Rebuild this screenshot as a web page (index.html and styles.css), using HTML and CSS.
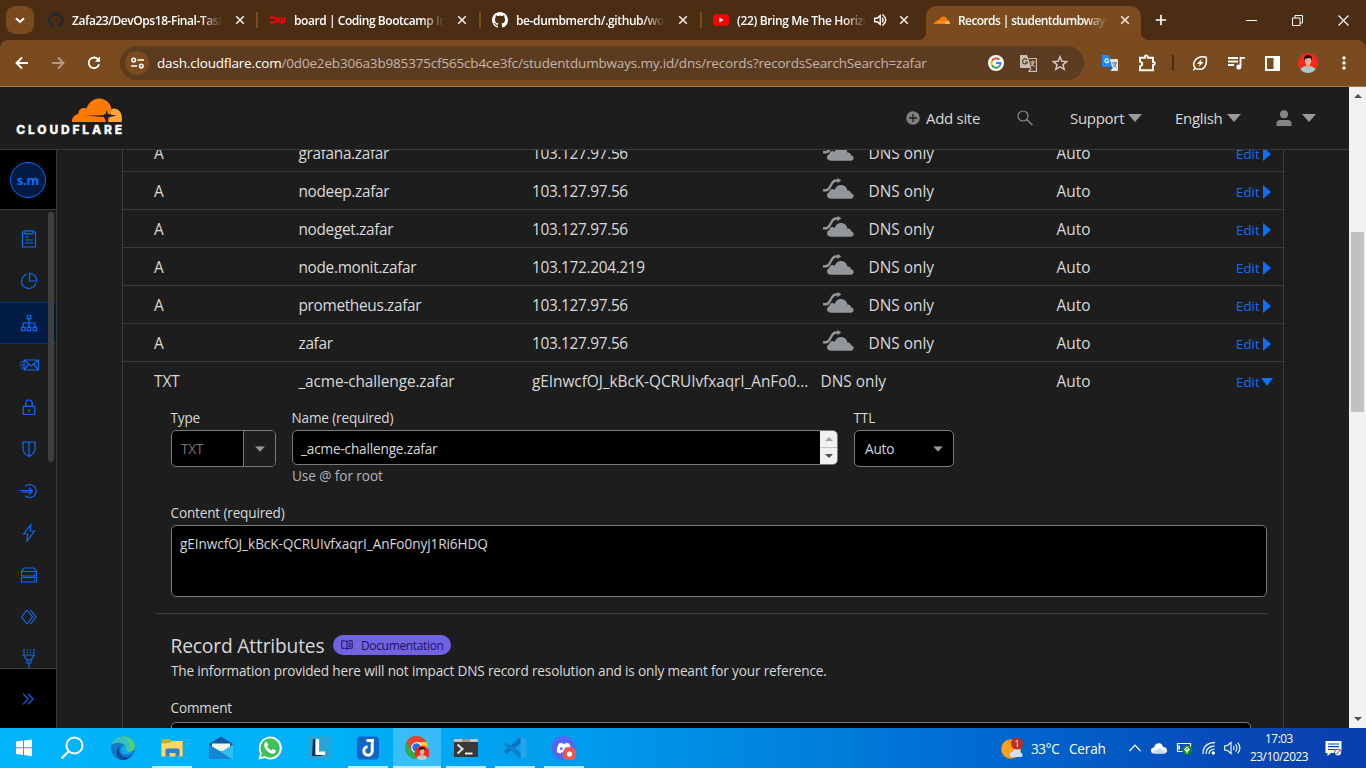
FILE: index.html
```html
<!DOCTYPE html>
<html lang="en">
<head>
<meta charset="utf-8">
<title>Records | studentdumbways</title>
<link rel="stylesheet" href="styles.css">
</head>
<body>
<svg width="0" height="0" class="defs">
  <symbol id="x" viewBox="0 0 10 10"><path d="M1.2 1.2 8.8 8.8M8.8 1.2 1.2 8.8" stroke="#f3e9e0" stroke-width="1.6"/></symbol>
  <symbol id="gh" viewBox="0 0 16 16"><path d="M8 0C3.58 0 0 3.58 0 8c0 3.54 2.29 6.53 5.47 7.59.4.07.55-.17.55-.38 0-.19-.01-.82-.01-1.49-2.01.37-2.53-.49-2.69-.94-.09-.23-.48-.94-.82-1.13-.28-.15-.68-.52-.01-.53.63-.01 1.08.58 1.23.82.72 1.21 1.87.87 2.33.66.07-.52.28-.87.51-1.07-1.78-.2-3.64-.89-3.64-3.95 0-.87.31-1.59.82-2.15-.08-.2-.36-1.02.08-2.12 0 0 .67-.21 2.2.82.64-.18 1.32-.27 2-.27s1.36.09 2 .27c1.53-1.04 2.2-.82 2.2-.82.44 1.1.16 1.92.08 2.12.51.56.82 1.27.82 2.15 0 3.07-1.87 3.75-3.65 3.95.29.25.54.73.54 1.48 0 1.07-.01 1.93-.01 2.2 0 .21.15.46.55.38A8.01 8.01 0 0 0 16 8c0-4.42-3.58-8-8-8Z"/></symbol>
  <symbol id="cloud" viewBox="0 0 34 24"><path d="M2 13.300H4.500c2.200 0 2.800-.5 4.200-3l2-3.500C12 4.300 13 3.500 15 3.500h2.500" fill="none" stroke="#92979b" stroke-width="2.400"/><path d="M16.500 1 20.300 3.300l-3.800 3z" fill="#92979b"/><path d="M10.500 21.800c-2.800 0-4.500-1.500-4.500-3.600 0-1.600 1-2.800 2.500-3.300 0-1.800 1.200-3 2.900-3 1 0 1.800.4 2.300 1.100C14.700 9.500 16.900 8 19.800 8c3.700 0 6.300 2.400 6.500 5.500 2.200-.2 3.700 1 3.700 2.800 1.600.2 2.600 1.300 2.600 2.700 0 1.700-1.200 2.800-2.900 2.800z" fill="#92979b"/></symbol>
  <symbol id="caret" viewBox="0 0 14 8"><path d="M0 0h14L7 8z" fill="#999"/></symbol>
  <symbol id="face" viewBox="0 0 20 20"><circle cx="10" cy="10" r="10" fill="#f8261c"/><path d="M2.500 16.500C4 13.500 7 13 10 13s6 .5 7.500 3.500A10 10 0 0 1 2.500 16.500z" fill="#a9cbd0"/><path d="M8 10h4v4l-2 1-2-1z" fill="#d9a184"/><ellipse cx="10" cy="7.800" rx="3.200" ry="4" fill="#e5b294"/><path d="M6.200 7.500C5.500 3.500 7.500 2 10.200 2s4.500 1.700 3.600 5.500c-.4-1.500-.8-2.300-1.500-2.500-1.500.3-4.300-.2-6.100 2.500z" fill="#17130f"/></symbol>
</svg>

<div class="tabs">
  <div class="tabsearch"><svg width="10" height="7" viewBox="0 0 10 7"><path d="M1 1.200 5 5l4-3.800" fill="none" stroke="#fff" stroke-width="1.900"/></svg></div>
  <div class="tab t1"><svg class="fav" fill="#24292f"><use href="#gh"/></svg><span class="title">Zafa23/DevOps18-Final-Task</span><svg class="x"><use href="#x"/></svg></div>
  <div class="tab t2"><svg class="fav" viewBox="0 0 16 16"><path d="M0 5.500h3.500q3 0 3 2.500t-3 2.500H0M8.500 5v2.500q0 3 3.200 3t3.200-3V5M11.700 5v4" fill="none" stroke="#f00808" stroke-width="1.900"/></svg><span class="title">board | Coding Bootcamp Indonesia</span><svg class="x"><use href="#x"/></svg></div>
  <div class="tab t3"><svg class="fav" fill="#fff"><use href="#gh"/></svg><span class="title">be-dumbmerch/.github/workflows</span><svg class="x"><use href="#x"/></svg></div>
  <div class="tab t4"><svg class="fav" viewBox="0 0 16 16"><rect y="2.200" width="16" height="11.600" rx="3" fill="#f00"/><path d="M6.300 5.500v5l4.200-2.500z" fill="#fff"/></svg><span class="title">(22) Bring Me The Horizon</span><svg class="aud" width="14" height="14" viewBox="0 0 14 14"><path d="M1.700 5.200h2.500l3-2.600v8.800l-3-2.600H1.700z" fill="none" stroke="#fff" stroke-width="1.400"/><path d="M9.200 4.700q1.700 2.300 0 4.600M9.500 1.500q6.500 5.500 0 11" fill="none" stroke="#fff" stroke-width="1.400"/></svg><svg class="x"><use href="#x"/></svg></div>
  <div class="tab active"><svg class="fav" viewBox="0 0 16 16"><path d="M0 12c0-2 1.300-2.800 2.500-2.800C3 7.500 4.500 7.500 5.500 8c.8-2.600 2.500-3.500 4-3.500 2 0 3.500 1.500 3.500 4V12z" fill="#ff7a00"/><path d="M10.500 12c1-1.500 1.500-3.800 2.700-3.800 1.800 0 2.800 1.500 2.800 3.800z" fill="#ffb055"/><path d="M4 10h8" stroke="#ffd0a0" stroke-width=".6"/></svg><span class="title">Records | studentdumbways.my.id</span><svg class="x"><use href="#x"/></svg></div>
  <svg class="plus" width="12" height="12" viewBox="0 0 12 12"><path d="M6 .8v10.400M.8 6h10.400" stroke="#fff" stroke-width="1.600"/></svg>
  <div class="win">
    <svg width="11" height="11"><path d="M0 5.500h11" stroke="#fff"/></svg>
    <svg width="11" height="11"><path d="M.5 3h7.500v7.500H.5zM3 3V.5h7.500V8H8" fill="none" stroke="#fff"/></svg>
    <svg width="11" height="11"><path d="M.5.500l10 10M10.500.500l-10 10" stroke="#fff" stroke-width="1.100"/></svg>
  </div>
</div>

<div class="toolbar">
  <div class="nav">
    <svg width="14" height="14" viewBox="0 0 14 14"><path d="M13 7H2M7 1.500 1.500 7 7 12.500" fill="none" stroke="#fff" stroke-width="1.800"/></svg>
    <svg width="14" height="14" viewBox="0 0 14 14" opacity=".45"><path d="M1 7h11M7 1.500 12.500 7 7 12.500" fill="none" stroke="#fff" stroke-width="1.800"/></svg>
    <svg width="14" height="14" viewBox="0 0 14 14"><path d="M12.100 8.300A5.300 5.300 0 1 1 11 3.300L12.600 5" fill="none" stroke="#fff" stroke-width="1.800"/><path d="M13 .5v5.200H7.800z" fill="#fff"/></svg>
  </div>
  <div class="omni">
    <div class="site"><svg width="13" height="12" viewBox="0 0 13 12"><g fill="none" stroke="#fff" stroke-width="1.500"><circle cx="2.700" cy="3" r="1.800"/><path d="M6.500 3H13M0 9h6"/><circle cx="10.300" cy="9" r="1.800"/></g></svg></div>
    <div class="url"><b>dash.cloudflare.com</b><span>/0d0e2eb306a3b985375cf565cb4ce3fc/studentdumbways.my.id/dns/records?recordsSearchSearch=zafar</span></div>
    <div class="omniicons">
      <svg width="16" height="16" viewBox="0 0 16 16"><circle cx="8" cy="8" r="8" fill="#fff"/><g fill="none" stroke-width="2"><path d="M4 5.700A4.600 4.600 0 0 1 11.300 4.700" stroke="#ea4335"/><path d="M4 5.700a4.600 4.600 0 0 0 0 4.600" stroke="#fbbc05"/><path d="M4 10.300a4.600 4.600 0 0 0 7.200 1.100" stroke="#34a853"/><path d="M11.200 11.400A4.600 4.600 0 0 0 12.600 8H8" stroke="#4285f4"/></g></svg>
      <svg width="17" height="17" viewBox="0 0 17 17"><path d="M1 0h6l1.500 3.500L11 13H1q-1 0-1-1V1q0-1 1-1z" fill="#c9bdb2"/><path d="M9 3.500h7.400v12.900H9l2-3.400" fill="none" stroke="#c9bdb2" stroke-width="1.200"/><path d="M10 7h5M12.500 5.500V7M14 7q-1 3-3.500 4M11.500 8q1 2.500 3 3.500" fill="none" stroke="#c9bdb2" stroke-width="1.100"/><path d="M7 5a2.500 2.500 0 1 0 .4 2H5" fill="none" stroke="#5c3c20" stroke-width="1.200"/></svg>
      <svg width="16" height="16" viewBox="0 0 16 16"><path d="m8 1.800 1.900 4.400 4.700.4-3.600 3.100 1.100 4.600L8 11.900l-4.100 2.400L5 9.700 1.400 6.600l4.700-.4z" fill="none" stroke="#d6cbc1" stroke-width="1.500"/></svg>
    </div>
  </div>
  <div class="exts">
    <svg width="16" height="16" viewBox="0 0 16 16"><path d="M7 4h8q1 0 1 1v10q0 1-1 1H9z" fill="#dce4ec"/><path d="M1 0h6l3 12H1q-1 0-1-1V1q0-1 1-1z" fill="#2685f5"/><path d="M8 12h3l-2.500 4z" fill="#1755c5"/><path d="M6.500 4.500a2 2 0 1 0 .3 1.800H5" fill="none" stroke="#fff" stroke-width="1.100"/><path d="M10 8h5M12.500 7v1M14 8q-.5 2.500-2.500 4M11.500 9q1 2.500 3 3.500" fill="none" stroke="#678" stroke-width="1"/></svg>
    <svg class="puz" width="18" height="18" viewBox="0 0 18 18"><path d="M2 3.800h4.800V3a1.500 1.500 0 0 1 3 0v.8H15V8h.3a1.500 1.500 0 0 1 0 3H15v5.200H2v-4q2.300-.5 2.300-2.200T2 7.800z" fill="none" stroke="#fff" stroke-width="1.900"/></svg>
    <i class="tsep"></i>
    <svg class="leaf" width="16" height="16" viewBox="0 0 16 16"><path d="M3.500 13.300C-.8 9 3.500 1.800 10.500 1.700c1.500 0 3 0 3.500.4 1.700 6.900-1.500 12.200-6 12.200-1.800 0-3.300-.3-4.500-1zM1.200 15.200l2.300-2" fill="none" stroke="#fff" stroke-width="1.500"/><path d="M9.700 4 4.800 9h3l-1.200 3.200L11.500 7H8.700z" fill="#fff"/></svg>
    <svg class="mus" width="17" height="14" viewBox="0 0 17 14"><path d="M0 2h10M0 5.500h10M0 9h6M12.500 11V1.800H17" fill="none" stroke="#fff" stroke-width="1.800"/><circle cx="10.800" cy="11" r="2.500" fill="#fff"/></svg>
    <svg class="pan" width="15" height="15" viewBox="0 0 15 15"><path d="M1 1h13v13H1z" fill="none" stroke="#fff" stroke-width="2"/><path d="M8.500 1H14v13H8.500z" fill="#fff"/></svg>
    <svg class="ava" width="20" height="20"><use href="#face"/></svg>
    <svg class="dots" width="4" height="14" viewBox="0 0 4 14" fill="#fff"><circle cx="2" cy="2" r="1.700"/><circle cx="2" cy="7" r="1.700"/><circle cx="2" cy="12" r="1.700"/></svg>
  </div>
</div>

<div class="page">
  <div class="app">
    <div class="header">
      <svg class="logo" width="110" height="42" viewBox="0 0 110 42">
        <path d="M57 29c-.5-4 2.500-7.500 6.500-8-.5-4 3.500-7 8-5.500C73 11 77.500 5.500 84 5.500c7 0 12 5 12.500 11.500L93.500 29z" fill="#ff7a00"/>
        <path d="M96.500 16c5-2 10 2 10.300 8 .1 2 .2 3.500-.1 5H93c2-4 2.500-8 3.500-13z" fill="#ffa73d"/>
        <path d="M70 22.500l18-.300 2.700-1.500 1-4 1.200 4.300 8.600 1.700-8.200 1.600L93 29h-2l-2-5z" fill="#1d1d1d"/>
        <text x="1.300" y="41" class="word" textLength="105.500">CLOUDFLARE</text>
      </svg>
      <div class="hitem add"><svg width="14" height="14" viewBox="0 0 14 14"><circle cx="7" cy="7" r="6.800" fill="#808080"/><path d="M7 3v8M3 7h8" stroke="#1d1d1d" stroke-width="1.300"/></svg><span>Add site</span></div>
      <svg class="find" width="16" height="16" viewBox="0 0 16 16"><circle cx="6" cy="6" r="5" fill="none" stroke="#8a8a8a" stroke-width="1.200"/><path d="m9.500 9.500 6 5.500" stroke="#8a8a8a" stroke-width="1.400"/></svg>
      <div class="hitem sup"><span>Support</span><svg width="14" height="8"><use href="#caret"/></svg></div>
      <div class="hitem eng"><span>English</span><svg width="14" height="8"><use href="#caret"/></svg></div>
      <div class="hitem usr"><svg width="16" height="16" viewBox="0 0 16 16" fill="#858585"><circle cx="8" cy="4.300" r="4"/><path d="M.5 16v-2.500Q.5 10 4 10h8q3.500 0 3.500 3.500V16z"/></svg><svg width="14" height="8"><use href="#caret"/></svg></div>
    </div>
    <div class="body">
      <div class="side">
        <div class="acct"><span>s.m</span></div>
        <div class="menu">
          <div class="mi"><svg viewBox="0 0 20 20"><path d="M6 3H3.500v15h13V3H14M6 1.800h8v3H6zM6 8h4M6 11h8M6 14h8"/></svg></div>
          <div class="mi"><svg viewBox="0 0 20 20"><path d="M8 3.300A7.200 7.200 0 1 0 16.800 12M10.500 2.300V10h7.200a7.400 7.400 0 0 0-7.200-7.700z"/></svg></div>
          <div class="mi on"><svg viewBox="0 0 20 20"><path d="M8.300 2.500h3.400v3.400H8.300zM2.500 14.300h3.400v3.400H2.500zM8.300 14.300h3.400v3.400H8.300zM14.100 14.300h3.400v3.400h-3.400zM10 6v8M4.200 14v-4h11.600v4"/></svg></div>
          <div class="mi"><svg viewBox="0 0 20 20"><path d="M5 5h14.500v10H5zM5 5l7.200 6 7.300-6M5 15l5-6M19.500 15l-5-6M1.500 7H4M.5 10H4M1.500 13H4"/></svg></div>
          <div class="mi"><svg viewBox="0 0 20 20"><path d="M4.300 9.300h11.400v8.200H4.300zM6.800 9V6.300Q6.800 3 10 3t3.200 3.300V9M10 12v3"/></svg></div>
          <div class="mi"><svg viewBox="0 0 20 20"><path d="M4 3h12v7q0 4.500-6 7.500Q4 14.500 4 10zM10 3v14"/></svg></div>
          <div class="mi"><svg viewBox="0 0 20 20"><path d="M6.200 5.300a6.500 6.500 0 1 1 0 9.400M.5 9.500H13M3 11H13M10 6.800l3.500 3.400L10 13.500"/></svg></div>
          <div class="mi"><svg viewBox="0 0 20 20"><path d="M11.800 1.500 4.800 11h4l-1 7.500L15.500 8h-4.300z"/></svg></div>
          <div class="mi"><svg viewBox="0 0 20 20"><path d="M2.500 6.500h15V11h-15zM2.500 6.500 5 3h10l2.500 3.500M2.500 12.500h15V17h-15zM14.500 9h1.500M14.500 15h1.500"/></svg></div>
          <div class="mi"><svg viewBox="0 0 20 20"><path d="M8 3 2.500 10 8 17M8 3l5.500 7L8 17M11.500 3l5.500 7-5.500 7"/></svg></div>
          <div class="mi"><svg viewBox="0 0 20 20"><path d="M4 .8h2M8 .8h1M11 .8h1M14 .8h2M4 3.300h2M8 3.300h1M11 3.300h1M14 3.300h2M4.500 6h11L12 11v3H8v-3zM8 11h4M10 14v5"/></svg></div>
          <i class="mscroll"></i>
        </div>
        <div class="expand"><svg width="12" height="12" viewBox="0 0 12 12"><path d="m1 .7 5 5.300-5 5.300M6 .7 11 6l-5 5.300" fill="none" stroke="#0a66f5" stroke-width="1.200"/></svg></div>
      </div>
      <div class="main">
        <div class="card">
          <div class="row first"><span>A</span><span class="nm">grafana.zafar</span><span class="ip">103.127.97.56</span><span class="px"><svg><use href="#cloud"/></svg>DNS only</span><span>Auto</span><a>Edit<i></i></a></div>
          <div class="row"><span>A</span><span class="nm">nodeep.zafar</span><span class="ip">103.127.97.56</span><span class="px"><svg><use href="#cloud"/></svg>DNS only</span><span>Auto</span><a>Edit<i></i></a></div>
          <div class="row"><span>A</span><span class="nm">nodeget.zafar</span><span class="ip">103.127.97.56</span><span class="px"><svg><use href="#cloud"/></svg>DNS only</span><span>Auto</span><a>Edit<i></i></a></div>
          <div class="row"><span>A</span><span class="nm">node.monit.zafar</span><span class="ip">103.172.204.219</span><span class="px"><svg><use href="#cloud"/></svg>DNS only</span><span>Auto</span><a>Edit<i></i></a></div>
          <div class="row"><span>A</span><span class="nm">prometheus.zafar</span><span class="ip">103.127.97.56</span><span class="px"><svg><use href="#cloud"/></svg>DNS only</span><span>Auto</span><a>Edit<i></i></a></div>
          <div class="row"><span>A</span><span class="nm">zafar</span><span class="ip">103.127.97.56</span><span class="px"><svg><use href="#cloud"/></svg>DNS only</span><span>Auto</span><a>Edit<i></i></a></div>
          <div class="row open"><span>TXT</span><span class="acme">_acme-challenge.zafar</span><span class="val">gEInwcfOJ_kBcK-QCRUIvfxaqrI_AnFo0...</span><span class="px">DNS only</span><span>Auto</span><a>Edit<i class="down"></i></a></div>
          <div class="form">
            <div class="fields">
              <div class="f type"><label>Type</label><div class="box"><span>TXT</span><b><svg width="10" height="6" viewBox="0 0 14 8"><use href="#caret"/></svg></b></div></div>
              <div class="f name"><label>Name (required)</label><div class="box"><span>_acme-challenge.zafar</span><div class="spin"><i class="up"></i><i class="dn"></i></div></div><small>Use @ for root</small></div>
              <div class="f ttl"><label>TTL</label><div class="box"><span>Auto</span><svg width="10" height="6" viewBox="0 0 14 8"><use href="#caret"/></svg></div></div>
            </div>
            <div class="f content"><label>Content (required)</label><div class="area">gEInwcfOJ_kBcK-QCRUIvfxaqrI_AnFo0nyj1Ri6HDQ</div></div>
            <div class="attrs">
              <div class="head"><h2>Record Attributes</h2><span class="badge"><svg width="12" height="10" viewBox="0 0 12 10"><path d="M6 1.500Q3.500.2.800.8v7.500Q3.500 7.700 6 9q2.500-1.300 5.200-.700V.8Q8.500.2 6 1.500zM6 1.500V9M7.500 3.300h2.200M7.500 5h2.200M7.500 6.600h2.200" fill="none" stroke="#21106b" stroke-width="1"/></svg><span>Documentation</span></span></div>
              <p>The information provided here will not impact DNS record resolution and is only meant for your reference.</p>
              <label>Comment</label>
              <div class="comment"></div>
            </div>
          </div>
        </div>
      </div>
    </div>
  </div>
  <div class="scroll"><i class="up"></i><b></b><i class="dn"></i></div>
</div>

<div class="taskbar">
  <div class="apps">
    <div class="ap"><svg viewBox="0 0 24 24"><path d="M4 5.600 11 4.600V11.300H4zM12 4.500 20 3.400v7.900h-8zM4 12.300h7V19L4 18zM12 12.300h8v7.900l-8-1.100z" fill="#fff"/></svg></div>
    <div class="ap wide"><svg viewBox="0 0 24 24"><circle cx="14.500" cy="9.500" r="8" fill="none" stroke="#fff" stroke-width="2"/><path d="M8.800 15.200 1.500 22.500" stroke="#fff" stroke-width="2.300"/></svg></div>
    <div class="ap"><svg viewBox="0 0 24 24"><circle cx="12" cy="12" r="12" fill="#1577c9"/><path d="M.5 9C2-1 17-3.500 23 7c2 5-1.500 9.500-7 8.500-3-.5-1.500-2-1.500-4C13.500 7 5 5 .5 9z" fill="#35c1c4"/><path d="M12 0c7 .2 12 5 12 10.500 0 4-3.500 6-8 5 6-3 3-12-4-15.500z" fill="#5ad45c" opacity=".8"/><path d="M9 11c-2 4 0 9 5 10 3 .7 6-.5 8-2.500C19 22 15.500 24 12 24 5 23.500 3 13 9 11z" fill="#104b93"/><path d="M14.500 11c1 2-1.500 3 .3 4.300 2.200 1.500 5.500 1 7.200-.3-2.500 5-13 5-12.500-1.500.2-2 3-4.300 5-2.500z" fill="#00aef4"/></svg></div>
    <div class="ap run"><svg viewBox="0 0 24 24"><path d="M1.500 3h8l2 2h11v15h-21z" fill="#e4a00f"/><path d="M1.500 7h8l2-2h11v15.500h-21z" fill="#ffd768"/><path d="M5.500 20.500V14q0-1.500 1.500-1.500h11q1.500 0 1.500 1.500v6.500h-4V17h-6v3.500z" fill="#2e7fce"/></svg></div>
    <div class="ap"><svg viewBox="0 0 24 24"><path d="M0 8 12 .5 24 8v3H0z" fill="#1258a5"/><path d="M3 7.500h18V15H3z" fill="#f2f4f6"/><path d="M0 8.500 12 16l12-7.500V23H0z" fill="#2fbff1"/><path d="M0 8.500V23h23z" fill="#1685d4"/></svg></div>
    <div class="ap"><svg viewBox="0 0 24 24"><path d="M.5 23.500 2.200 17.500A11.500 11.500 0 1 1 6.600 22z" fill="#fff"/><circle cx="12.100" cy="12" r="9.700" fill="#3dc258"/><path d="M2.700 21.300 4 16.500 7.500 20z" fill="#3dc258"/><path d="M7.200 6.500c1.200-1 2-.5 2.500 1l.5 1.600-1 1.500c1 2 2.200 3 4.200 3.900l1.400-1.600 3 1.400c.5 2-1.400 3.500-3.500 3.400C10 17 6 12 6.200 9c0-1 .3-1.900 1-2.500z" fill="#fff"/></svg></div>
    <div class="ap"><svg viewBox="0 0 24 24"><path d="M0 0h24v24H0z" fill="#22a6d8"/><path d="M6 3h3l-1 14 8 3H5z" fill="#0e2b60"/><path d="M8.500 3h3.600v12.500h6V19H8.500z" fill="#fff"/></svg></div>
    <div class="ap run"><svg viewBox="0 0 24 24"><rect x="1" y=".5" width="22" height="23" rx="4" fill="#1265c8"/><path d="M10.500 4.500h7.500M16.200 4v11a4.200 4.200 0 1 1-4.700-4.200" fill="none" stroke="#fff" stroke-width="3"/></svg></div>
    <div class="ap run cur"><svg viewBox="0 0 24 24"><circle cx="11.500" cy="11.500" r="11.500" fill="#2da94f"/><path d="M1.600 5.700A11.500 11.500 0 0 1 21.500 6l-10 .5-5 8z" fill="#ea4335"/><path d="M21.500 6A11.500 11.500 0 0 1 11.500 23L16.500 14 11.500 6z" fill="#fcc934"/><circle cx="11.500" cy="11.500" r="5.300" fill="#fff"/><circle cx="11.500" cy="11.500" r="4.200" fill="#1a73e8"/><svg x="9.500" y="9.500" width="15" height="15" viewBox="0 0 20 20"><use href="#face" width="20" height="20"/></svg></svg></div>
    <div class="ap run"><svg viewBox="0 0 24 24"><path d="M0 3h24v18H0z" fill="#383838"/><path d="M0 3h24v3H0z" fill="#c4c4c4"/><path d="M8 3h8v3H8z" fill="#999"/><path d="m3.500 8.500 5 4.500-5 4.500" fill="none" stroke="#ddd" stroke-width="2.200"/><path d="M11 17.500h7.500" stroke="#fff" stroke-width="1.800"/></svg></div>
    <div class="ap run"><svg viewBox="0 0 24 24"><path d="M17.500 1 23.500 3.500v17l-6 2.500z" fill="#27a3ea"/><path d="M17.500 1v6.500L3.500 18 .5 15.500z" fill="#0a72bd"/><path d="M.5 8.300 3.500 6l14 10.500V23z" fill="#0c81cf"/></svg></div>
    <div class="ap run"><svg viewBox="0 0 24 24"><circle cx="11.500" cy="12" r="11.800" fill="#5865f2"/><path d="M7 7.500 10 6.800l.5 1h3l.5-1 3 .7c1.800 2.700 2.500 5.500 2 8.500q-1.500 1.200-3.500 1.800l-.9-1.500q-2.600.8-5.200 0l-.9 1.500Q6.500 17.200 5 16c-.4-3.200.4-6 2-8.500z" fill="#fff"/><circle cx="9.300" cy="12.700" r="1.400" fill="#5865f2"/><circle cx="14.200" cy="12.700" r="1.400" fill="#5865f2"/><circle cx="17.500" cy="18" r="7" fill="#eb5757"/><circle cx="17.500" cy="18" r="2.600" fill="#fff"/></svg></div>
  </div>
  <div class="tray">
    <svg class="wx" width="24" height="24" viewBox="0 0 24 24"><circle cx="11" cy="13" r="9.800" fill="#f6a01c"/><path d="M10 20q-1-4 3-4.500 2-4.500 6-2 2 1 1.700 3 2.300 1 1.800 3.500-.5 1-2 1H11q-1 0-1-1z" fill="#cfe0f7"/><circle cx="17" cy="7.500" r="6" fill="#c42b1c"/><text x="14.500" y="11" class="n">1</text></svg>
    <span class="temp">33°C</span><span class="cond">Cerah</span>
    <svg class="chev" width="12" height="8" viewBox="0 0 12 8"><path d="M.5 7 6 1.200 11.500 7" fill="none" stroke="#fff" stroke-width="1.200"/></svg>
    <svg class="od" width="16" height="11" viewBox="0 0 16 11"><path d="M3 10.500Q0 10.500 0 7.500t3-3Q4.500 0 8 .3q3.300.3 4 3.700 4 .3 4 3.500 0 3-3 3z" fill="#fff"/><path d="M1 9 9 5l6 4.500-2 1H3z" fill="#c9dcf4"/></svg>
    <svg class="bat" width="17" height="14" viewBox="0 0 17 14"><path d="M1.500 2.500h13v8h-13z" fill="none" stroke="#fff" stroke-width="1.200"/><path d="M3.200 4.500v4" stroke="#fff" stroke-width="1.600"/><circle cx="11" cy="9" r="4.800" fill="#0d8a18"/><path d="M11 8v4.500M11 6 8.800 8.500 11 10.800l2.200-2.300z" fill="none" stroke="#fff" stroke-width="1.100"/></svg>
    <svg class="wifi" width="14" height="14" viewBox="0 0 14 14"><path d="M1 13Q1 2 13 1.500M4 13Q4 5.500 12.500 5M7 13q0-4.500 5.500-4.800" fill="none" stroke="#e6eefa" stroke-width="1.300"/><circle cx="11.300" cy="12" r="1.700" fill="#fff"/></svg>
    <svg class="vol" width="17" height="14" viewBox="0 0 17 14"><path d="M.7 4.700h2.500L7 1.500v11L3.200 9.300H.7zM9.300 5q1.500 2 0 4M11.500 3.300q3 3.700 0 7.400M13.700 1.700q4.500 5.300 0 10.600" fill="none" stroke="#fff" stroke-width="1.100"/></svg>
    <div class="clock"><span>17:03</span><span class="date">23/10/2023</span></div>
    <svg class="note" width="17" height="17" viewBox="0 0 17 17"><path d="M.5 1h16v12H6l-3.500 3v-3h-2z" fill="#fff"/><path d="M3 4h11M3 6.700h11M3 9.500h7" stroke="#0a45b0" stroke-width="1.200"/><circle cx="13" cy="12.500" r="3.800" fill="#0a45b0"/><circle cx="13" cy="12.500" r="2.900" fill="#fff"/><path d="m11 14.500 4-4" stroke="#0a45b0"/></svg>
  </div>
</div>
</body>
</html>
```
FILE: styles.css
```css
* { box-sizing: border-box; }
body { margin: 0; width: 1366px; height: 768px; overflow: hidden; display: flex; flex-direction: column; background: #1d1d1d; color: #d9d9d9; font-family: "Open Sans", "Noto Sans", sans-serif; }
svg { display: block; flex: none; }
.defs { position: absolute; }

/* browser tabs */
.tabs { flex: none; height: 40px; background: #4b2d14; display: flex; align-items: center; }
.tabsearch { width: 28px; height: 28px; margin: 0 2px 0 6px; border-radius: 9px; background: #7a4b1f; display: flex; align-items: center; justify-content: center; }
.tab { height: 34px; margin-top: 6px; padding: 0 13px 6px 12px; display: flex; align-items: center; color: #fff; font-size: 12px; font-weight: 600; letter-spacing: -.44px; }
.t1 { width: 222px; } .t2 { width: 223px; padding-right: 14px; } .t3 { width: 221px; padding: 0 14px 6px 11px; letter-spacing: -.38px; } .t4 { width: 224px; padding: 0 17px 6px 11px; letter-spacing: -.36px; }
.t1, .t2, .t3 { background: linear-gradient(#7a4b1f, #7a4b1f) right 6px / 2px 16px no-repeat; }
.fav { width: 16px; height: 16px; }
.title { flex: 1; margin: 0 13px 0 8px; overflow: hidden; white-space: nowrap; -webkit-mask: linear-gradient(90deg, #000 calc(100% - 22px), transparent); mask: linear-gradient(90deg, #000 calc(100% - 22px), transparent); }
.t4 .title { margin-right: 7px; }
.aud { margin-right: 12px; }
.x { width: 10px; height: 10px; }
.active { position: relative; width: 215px; padding: 0 11px 6px 8px; border-radius: 10px 10px 0 0; background: #7a4b1f; letter-spacing: -.6px; }
.active::before, .active::after { content: ""; position: absolute; bottom: 0; width: 8px; height: 8px; }
.active::before { left: -8px; background: radial-gradient(circle at 0 0, transparent 8px, #7a4b1f 8.500px); }
.active::after { right: -8px; background: radial-gradient(circle at 100% 0, transparent 8px, #7a4b1f 8.500px); }
.plus { margin-left: 14px; }
.win { margin-left: auto; padding-right: 17px; display: flex; gap: 35px; }

/* toolbar */
.toolbar { flex: none; height: 47px; background: radial-gradient(circle at 8px 8px, #7a4b1f 7.500px, #4b2d14 8px) 0 0 / 8px 8px no-repeat, radial-gradient(circle at 0 8px, #7a4b1f 7.500px, #4b2d14 8px) 100% 0 / 8px 8px no-repeat, #7a4b1f; border-bottom: 1px solid #a3774f; display: flex; align-items: center; }
.nav { display: flex; gap: 22px; padding-left: 15px; width: 120px; }
.omni { width: 964px; height: 34px; border-radius: 17px; background: #5c3c20; display: flex; align-items: center; padding: 0 16px 0 5px; }
.site { width: 24px; height: 24px; border-radius: 12px; background: #7a4b1f; display: flex; align-items: center; justify-content: center; }
.url { margin-left: 8px; font-size: 13.500px; color: #c4b5a8; white-space: nowrap; letter-spacing: -.172px; }
.url b { font-weight: 400; color: #fff; }
.omniicons { margin-left: auto; display: flex; gap: 15.500px; align-items: center; }
.exts { display: flex; align-items: center; padding-left: 18px; }
.puz { margin: 0 16px 0 20px; }
.tsep { width: 2px; height: 16px; background: #4b2d14; }
.leaf { margin: 0 20px 0 18px; }
.pan { margin: 0 18px 0 20px; }
.dots { margin-left: 24px; }

/* site header */
.page { flex: none; height: 641px; display: flex; }
.app { width: 1349px; display: flex; flex-direction: column; }
.header { flex: none; height: 63px; border-bottom: 1px solid #3a3a3a; display: flex; align-items: center; padding-left: 15px; color: #d9d9d9; font-size: 15px; letter-spacing: -.3px; }
.logo { margin-top: -8px; align-self: center; }
.word { font: 800 12px Inter, sans-serif; fill: #fff; stroke: #fff; stroke-width: .3px; }
.hitem { display: flex; align-items: center; white-space: nowrap; }
.add { margin-left: 781px; width: 111px; gap: 6px; }
.find { width: 16px; margin-right: 37px; }
.sup { width: 105px; gap: 4px; }
.eng { width: 101px; gap: 4px; }
.usr { gap: 10px; }
.hitem span { margin-top: -1px; }
.body { flex: 1; min-height: 0; display: flex; }

/* sidebar */
.side { width: 57px; border-right: 1px solid #3a3a3a; display: flex; flex-direction: column; }
.acct { flex: none; height: 60px; background: #000; border-bottom: 1px solid #3a3a3a; padding: 12px 0 0 10px; }
.acct span { display: flex; width: 36px; height: 36px; border: 1px solid #086fff; border-radius: 50%; background: #001c45; color: #086fff; font-size: 13px; font-weight: 700; letter-spacing: -.2px; align-items: center; justify-content: center; }
.menu { position: relative; height: 458px; overflow: hidden; padding-top: 8px; }
.mi { height: 42px; display: flex; align-items: center; justify-content: center; padding-left: 2px; }
.mi.on { background: #001c45; border: solid #00367d; border-width: 1px 0; }
.mi svg { width: 20px; height: 20px; fill: none; stroke: #0a6cff; stroke-width: 1.200; }
.mscroll { position: absolute; left: 48px; top: 2px; width: 6px; height: 250px; border-radius: 3px; background: #3f3f3f; }
.expand { flex: 1; background: #000; border-top: 1px solid #3a3a3a; display: flex; align-items: center; justify-content: center; }

/* records */
.main { flex: 1; overflow: hidden; padding: 0 65px; }
.card { border: solid #3d3d3d; border-width: 0 1px; height: 640px; margin-top: -16px; }
.row { height: 38px; border-bottom: 1px solid #3a3a3a; display: grid; grid-template-columns: 144.500px 233.500px 288.500px 236px 179.500px auto; padding-left: 31px; align-items: center; font-size: 15.400px; white-space: nowrap; padding-top: 2px; }
.row.open { border: 0; padding-top: 1px; }
.nm { letter-spacing: -.33px; }
.acme { letter-spacing: -.12px; }
.val { letter-spacing: -.05px; }
.ip { letter-spacing: -.33px; }
.px { display: flex; align-items: center; }
.px svg { width: 34px; height: 24px; margin: -6px 13.500px 0 .5px; }
.row a { display: flex; align-items: center; color: #086fff; font-size: 13.300px; }
.row a i { margin-left: 3px; border: solid transparent; border-width: 7px 0 7px 8px; border-left-color: #0a70ff; }
.row a i.down { margin-left: 1px; border-width: 8px 6.500px 0; border-color: #0a70ff transparent transparent; }
.form { padding: 8px 16px 0 48px; font-size: 13.600px; letter-spacing: -.17px; }
.form label { display: block; height: 22px; line-height: 20px; text-indent: -.5px; }
.fields { display: flex; gap: 16px; height: 95px; align-items: flex-start; }
.box { display: flex; align-items: center; height: 37px; border: 1px solid #7a7a7a; border-radius: 5px; background: #000; }
.type { width: 105px; }
.type .box { overflow: hidden; color: #777; padding-left: 9px; }
.type b { margin-left: auto; width: 32px; height: 100%; border-left: 1px solid #7a7a7a; background: #1d1d1d; display: flex; align-items: center; justify-content: center; }
.name { width: 546px; }
.name .box { height: 35px; padding-left: 8px; overflow: hidden; }
.name .box span { padding-top: 2px; }
.name small { display: block; font-size: 13.600px; color: #b5b5b5; line-height: 20px; margin-top: 1px; letter-spacing: -.08px; }
.spin { margin-left: auto; width: 17px; height: 33px; background: linear-gradient(#c1c1c1, #c1c1c1) 0 16px / 100% 1px no-repeat #f1f1f1; display: grid; grid-template-rows: 1fr 1fr; place-items: center; }
.spin i, .scroll i { border: 4px solid transparent; }
i.up { border-top-width: 0 !important; border-bottom: 4px solid #505050 !important; }
i.dn { border-bottom-width: 0 !important; border-top: 4px solid #505050 !important; }
.spin i.up { border-bottom-color: #a3a3a3 !important; }
.ttl { width: 100px; }
.ttl .box { padding: 0 10px; justify-content: space-between; }
.area { height: 72px; border: 1px solid #7a7a7a; border-radius: 5px; background: #000; padding: 9px 8px; line-height: 18px; letter-spacing: -.08px; }
.attrs { margin: 16px 0 0 -16px; padding: 21px 16px 0; border-top: 1px solid #3d3d3d; }
.head { display: flex; align-items: center; height: 22px; gap: 8px; }
h2 { margin: 0; font-size: 19.200px; font-weight: 400; line-height: 22px; letter-spacing: -.16px; text-indent: -.5px; white-space: nowrap; width: 154px; }
.badge { width: 118px; height: 20px; border-radius: 10px; background: #7164e0; color: #21106b; font-size: 12px; letter-spacing: -.35px; display: flex; align-items: center; padding-left: 8px; gap: 8px; margin-top: -2px; }
.attrs p { margin: 4px 0 17px; line-height: 20px; white-space: nowrap; }
.comment { height: 40px; width: 1080px; border: 1px solid #7a7a7a; border-radius: 5px; background: #000; margin-top: 2px; }
.scroll { width: 17px; background: #f1f1f1; display: flex; flex-direction: column; align-items: center; padding: 7px 0 7px; }
.scroll b { width: 13px; height: 180px; background: #c1c1c1; margin-top: 134px; }
.scroll .dn { margin-top: auto; }

/* taskbar */
.taskbar { flex: none; height: 40px; display: flex; color: #fff; background: linear-gradient(90deg, #00b4fb 0, #00b0f9 340px, #009aeb 600px, #0068d0 1000px, #0747b5 1250px, #083fad 1366px); }
.apps { display: flex; gap: 1px; }
.ap { width: 48px; height: 40px; display: flex; align-items: center; justify-content: center; background: linear-gradient(#bdeaff, #bdeaff) 4px 38px / 0 2px no-repeat; }
.wide { width: 49px; padding-right: 4px; }
.ap > svg { width: 24px; height: 24px; }
.run { background-size: 40px 2px; }
.cur { background: linear-gradient(#bdeaff, #bdeaff) 0 38px / 48px 2px no-repeat rgba(255,255,255,.22); }
.tray { margin-left: auto; display: flex; align-items: center; font-size: 13.600px; }
.n { font-size: 9px; fill: #fff; }
.temp { margin-left: 7px; width: 38px; letter-spacing: -.4px; }
.cond { width: 60px; letter-spacing: -.2px; }
.od { margin-left: 10px; } .bat { margin-left: 9px; } .wifi { margin-left: 9px; } .vol { margin-left: 8px; }
.clock { width: 76px; display: flex; flex-direction: column; align-items: center; font-size: 11.800px; line-height: 18px; letter-spacing: -.45px; }
.clock span:first-child { margin-top: -2px; }
.note { margin: 0 24px 0 8px; }
```
